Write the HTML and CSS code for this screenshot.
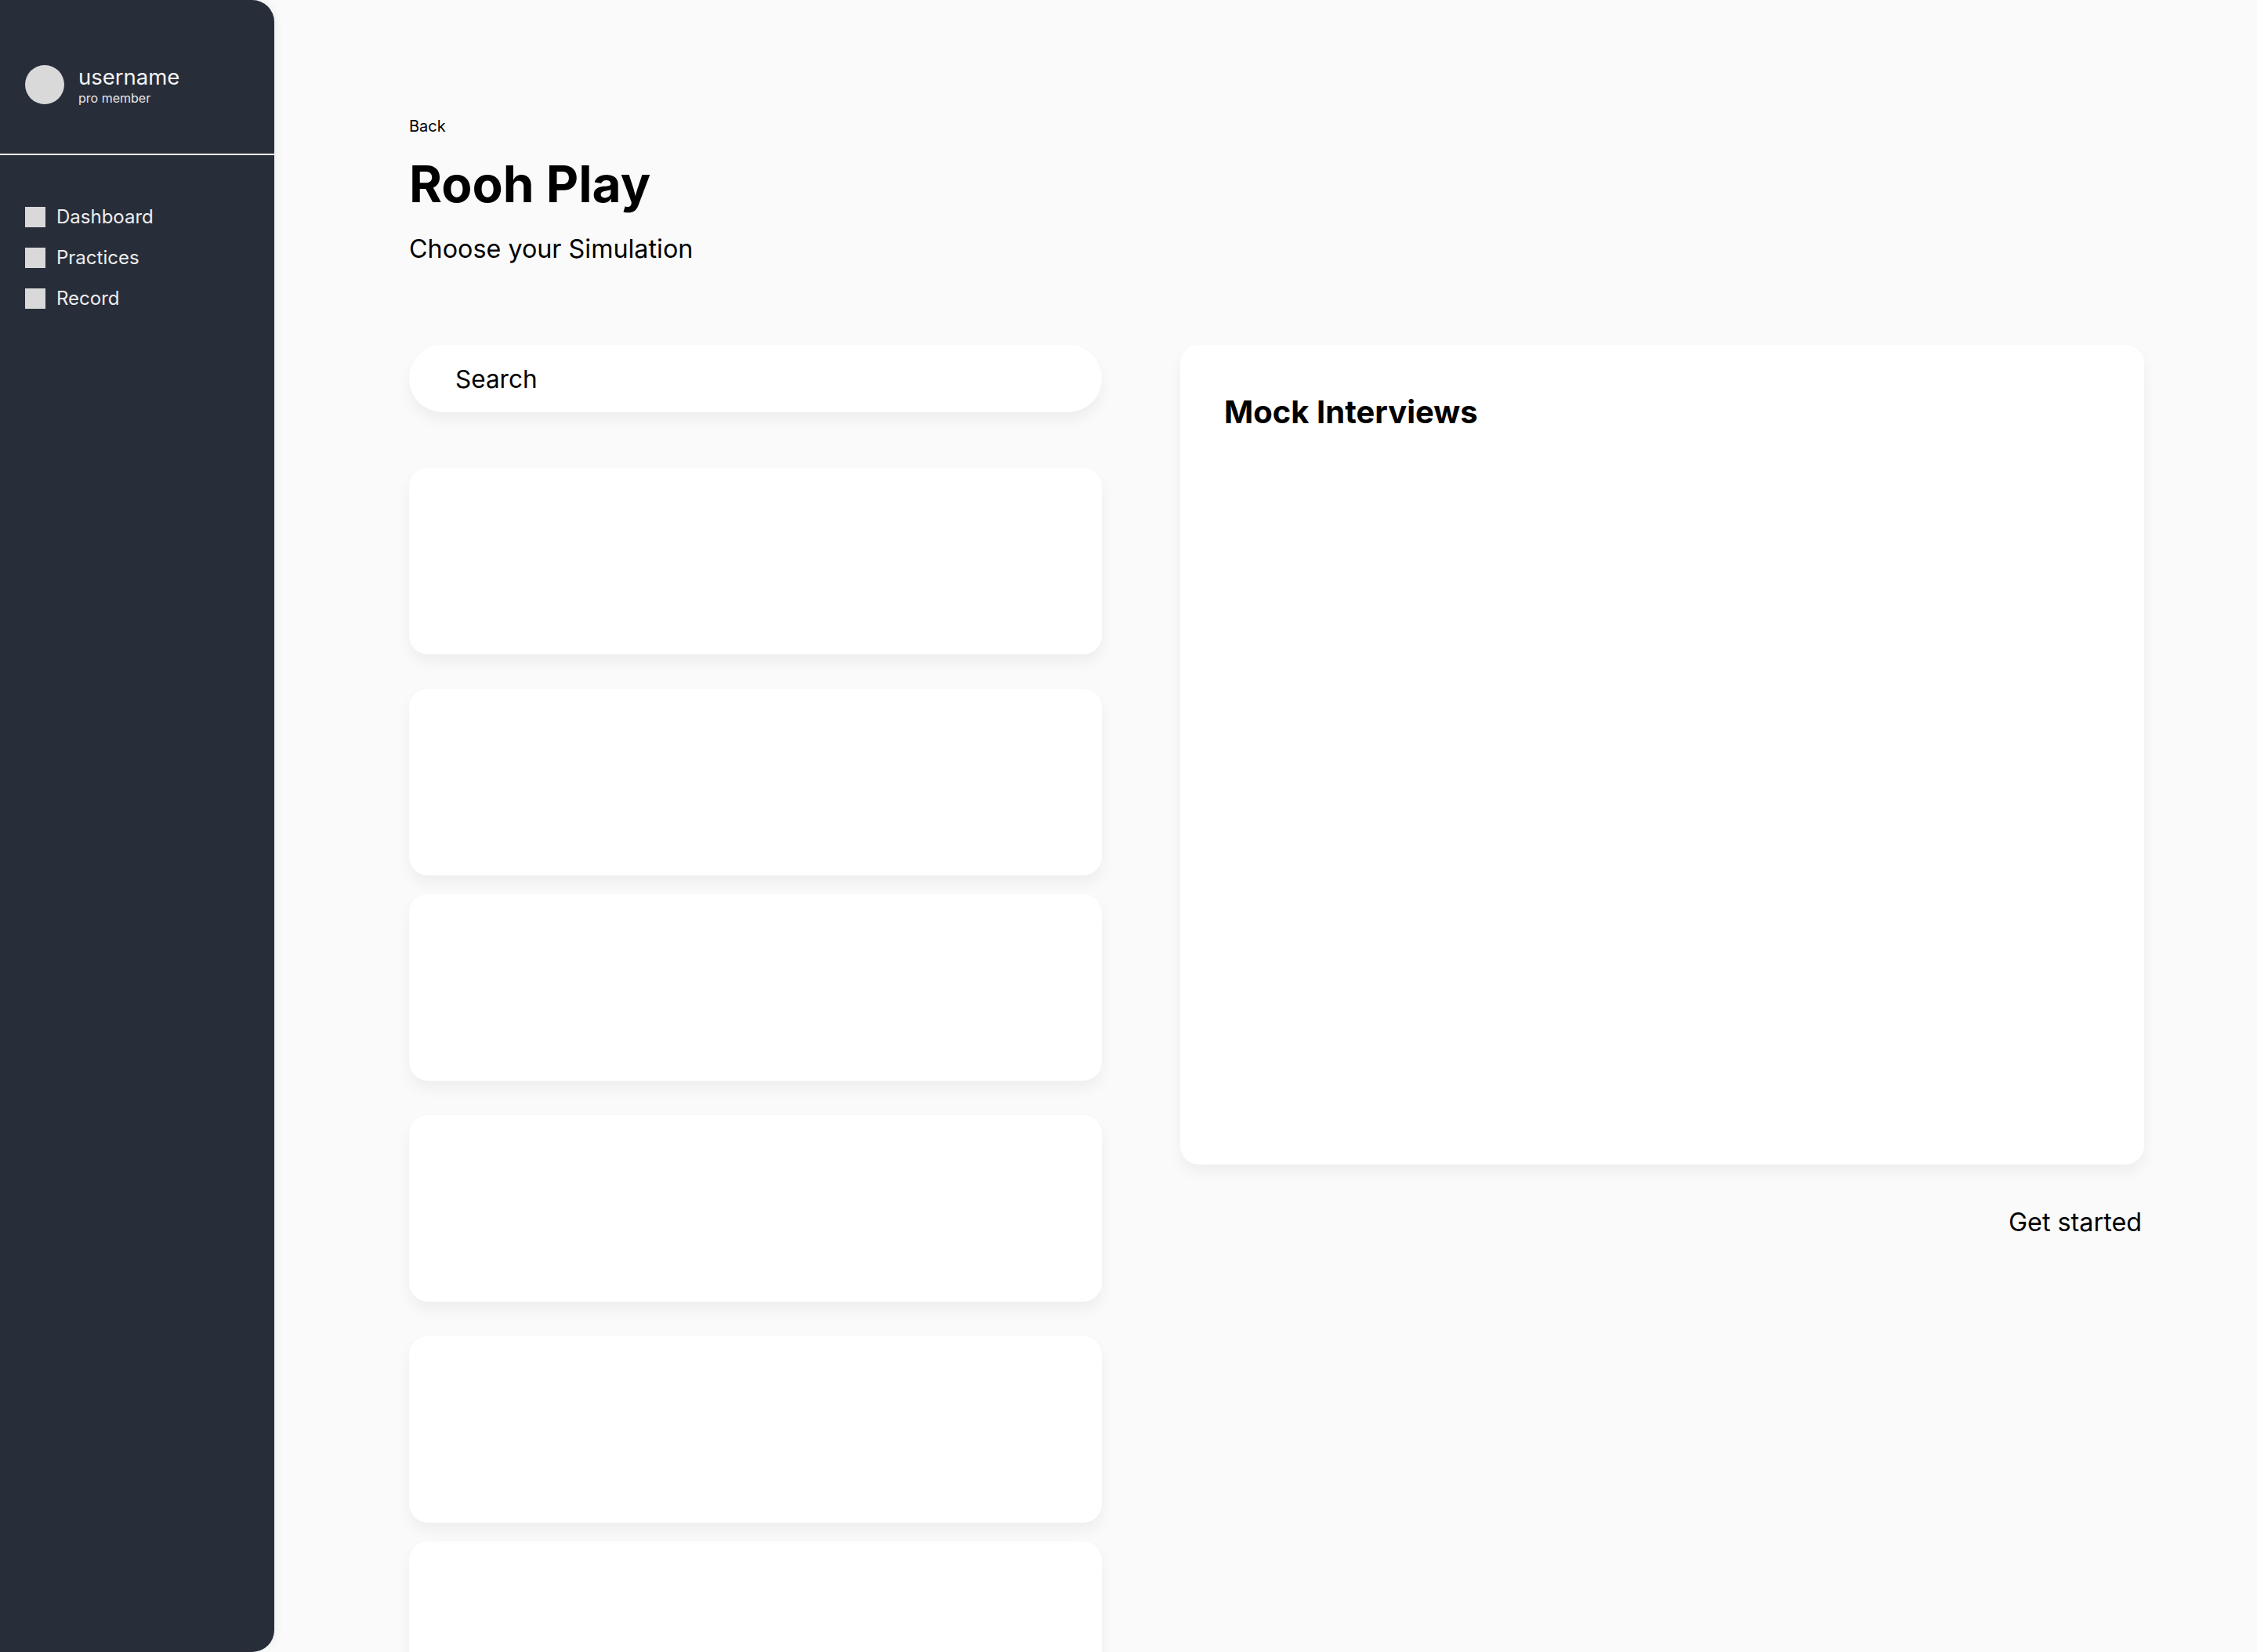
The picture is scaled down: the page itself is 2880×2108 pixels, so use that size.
FILE: index.html
```html
<!DOCTYPE html>
<html lang="en">
<head>
    <meta charset="UTF-8">
    <meta name="viewport" content="width=device-width, initial-scale=1.0">
    <title>Rooh Play</title>
    <link rel="stylesheet" href="styles.css">
</head>
<body>
    <!-- 侧边栏 -->
    <aside class="sidebar">
        <div class="profile">
            <div class="avatar"></div>
            <div class="profile-text">
                <div class="username">username</div>
                <div class="member">pro member</div>
            </div>
        </div>

        <nav class="nav">
            <a class="nav-item" href="#"><span class="nav-icon"></span>Dashboard</a>
            <a class="nav-item" href="#"><span class="nav-icon"></span>Practices</a>
            <a class="nav-item" href="#"><span class="nav-icon"></span>Record</a>
        </nav>
    </aside>

    <!-- 主内容 -->
    <main class="main">
        <a class="back" href="#">Back</a>
        <h1>Rooh Play</h1>
        <p class="subtitle">Choose your Simulation</p>

        <div class="columns">
            <div class="list">
                <div class="search">Search</div>
                <div class="sim-card"></div>
                <div class="sim-card"></div>
                <div class="sim-card tight"></div>
                <div class="sim-card"></div>
                <div class="sim-card"></div>
                <div class="sim-card tight"></div>
            </div>

            <div class="detail">
                <div class="detail-card">
                    <h2>Mock Interviews</h2>
                </div>
                <div class="actions">
                    <a class="start" href="#">Get started</a>
                </div>
            </div>
        </div>
    </main>
</body>
</html>
```

FILE: styles.css
```css
body {
    margin: 0;
    display: flex;
    align-items: flex-start;
    background-color: #fafafa;
    font-family: Inter, "Liberation Sans", sans-serif;
    color: #000;
}

a {
    color: inherit;
    text-decoration: none;
}

.sidebar {
    position: sticky;
    top: 0;
    flex-shrink: 0;
    width: 350px;
    height: 100vh;
    background: #282d3a;
    border-radius: 0 28px 28px 0;
    box-shadow: 4px 0 10px rgba(0,0,0,0.04);
    color: #f4f4f4;
}

.profile {
    display: flex;
    align-items: flex-start;
    gap: 18px;
    height: 198px;
    padding: 82px 0 0 32px;
    box-sizing: border-box;
    border-bottom: 2px solid #f2f2f2;
}

.avatar {
    width: 50px;
    height: 50px;
    margin-top: 1px;
    border-radius: 50%;
    background: #d9d9d9;
}

.username {
    font-size: 27.5px;
    line-height: 32px;
}

.member {
    font-size: 16px;
    line-height: 22px;
    color: #e6e6e6;
}

.nav {
    display: flex;
    flex-direction: column;
    gap: 26px;
    padding: 66px 0 0 32px;
}

.nav-item {
    display: flex;
    align-items: center;
    gap: 14px;
    font-size: 24px;
    line-height: 26px;
    color: #ededed;
}

.nav-icon {
    width: 26px;
    height: 26px;
    background: #d9d9d9;
}

.main {
    flex: 1;
    padding: 149px 144px 0 172px;
}

.back {
    display: block;
    font-size: 20px;
    line-height: 24px;
}

h1 {
    margin: 23px 0 0;
    font-size: 64px;
    line-height: 78px;
    font-weight: 700;
}

.subtitle {
    margin: 25px 0 0;
    font-size: 32.3px;
    line-height: 38px;
}

.columns {
    display: grid;
    grid-template-columns: 884px 1230px;
    column-gap: 100px;
    margin-top: 103px;
}

.search {
    height: 86px;
    padding-left: 59px;
    display: flex;
    align-items: center;
    background: white;
    border-radius: 43px;
    box-shadow: 0 10px 18px rgba(0,0,0,0.05);
    font-size: 31.5px;
}

.sim-card {
    height: 238px;
    margin-top: 44px;
    background: white;
    border-radius: 24px;
    box-shadow: 0 10px 18px rgba(0,0,0,0.05);
}

.search + .sim-card {
    margin-top: 71px;
}

.sim-card.tight {
    margin-top: 24px;
}

.detail-card {
    height: 1046px;
    padding: 62px 56px;
    box-sizing: border-box;
    background: white;
    border-radius: 24px;
    box-shadow: 0 10px 18px rgba(0,0,0,0.05);
}

h2 {
    margin: 0;
    font-size: 40px;
    line-height: 48px;
    font-weight: 700;
}

.actions {
    display: flex;
    justify-content: flex-end;
    margin-top: 54px;
}

.start {
    font-size: 32.3px;
    line-height: 40px;
    padding-right: 3px;
}
```
